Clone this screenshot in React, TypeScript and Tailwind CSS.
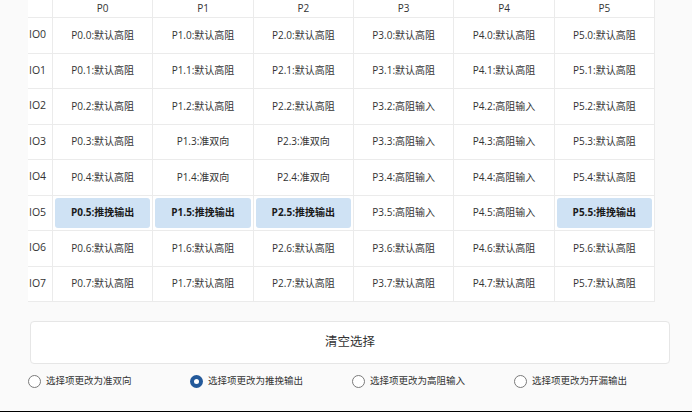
import React from "react";

const ports = ["P0", "P1", "P2", "P3", "P4", "P5"];
const data: string[][] = [
  ["默认高阻", "默认高阻", "默认高阻", "默认高阻", "默认高阻", "默认高阻"],
  ["默认高阻", "默认高阻", "默认高阻", "默认高阻", "默认高阻", "默认高阻"],
  ["默认高阻", "默认高阻", "默认高阻", "高阻输入", "高阻输入", "默认高阻"],
  ["默认高阻", "准双向", "准双向", "高阻输入", "高阻输入", "默认高阻"],
  ["默认高阻", "准双向", "准双向", "高阻输入", "高阻输入", "默认高阻"],
  ["推挽输出", "推挽输出", "推挽输出", "高阻输入", "高阻输入", "推挽输出"],
  ["默认高阻", "默认高阻", "默认高阻", "默认高阻", "默认高阻", "默认高阻"],
  ["默认高阻", "默认高阻", "默认高阻", "默认高阻", "默认高阻", "默认高阻"],
];
const selected: boolean[][] = data.map((row, r) => row.map((_, c) => r === 5 && c !== 3 && c !== 4));

const radios = ["选择项更改为准双向", "选择项更改为推挽输出", "选择项更改为高阻输入", "选择项更改为开漏输出"];

export default function App() {
  return (
    <div
      className="w-[692px] h-[412px] bg-[#fafafa] text-[#333] overflow-hidden flex flex-col"
      style={{ fontFamily: '"Open Sans", "Noto Sans CJK SC", sans-serif' }}
    >
      <div className="ml-[28px] w-[627px] bg-white border-r border-[#ebebeb]">
        <div className="grid grid-cols-[24px_repeat(6,1fr)] h-[18px] border-b border-[#ebebeb] text-[10px]">
          <div />
          {ports.map((p) => (
            <div key={p} className="flex items-center justify-center border-l border-[#ebebeb]">
              {p}
            </div>
          ))}
        </div>
        {data.map((row, r) => (
          <div key={r} className="grid grid-cols-[24px_repeat(6,1fr)] h-[35.5px] border-b border-[#ebebeb] text-[10px]">
            <div className="flex items-center pl-[1px] text-[10.5px]">IO{r}</div>
            {row.map((v, c) => (
              <div key={c} className="border-l border-[#ebebeb] p-[2px] flex">
                <div
                  className={
                    selected[r][c]
                      ? "flex-1 flex items-center justify-center rounded-[3px] bg-[#cfe2f4] font-bold text-[#1a1a1a]"
                      : "flex-1 flex items-center justify-center"
                  }
                >
                  {`P${c}.${r}:${v}`}
                </div>
              </div>
            ))}
          </div>
        ))}
      </div>
      <button className="ml-[30px] mt-[19px] w-[640px] h-[43px] bg-white border border-[#e6e6e6] rounded-[4px] text-[12.5px] text-[#333] flex items-center justify-center">
        清空选择
      </button>
      <div className="ml-[28px] mt-[10px] grid grid-cols-4 w-[648px] text-[9.5px]">
        {radios.map((t, i) => (
          <div key={t} className="flex items-center gap-[5px] h-[14px]">
            {i === 1 ? (
              <span className="w-[13px] h-[13px] rounded-full bg-[#23599a] flex items-center justify-center">
                <span className="w-[5px] h-[5px] rounded-full bg-white" />
              </span>
            ) : (
              <span className="w-[13px] h-[13px] rounded-full border border-[#7a7a7a] bg-white" />
            )}
            <span>{t}</span>
          </div>
        ))}
      </div>
      <div className="flex-1" />
      <div className="h-[1px] bg-black" />
    </div>
  );
}
